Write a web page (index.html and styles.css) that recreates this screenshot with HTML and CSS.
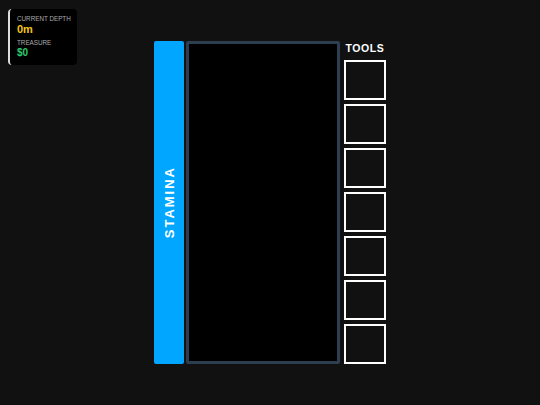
FILE: index.html
```html
<!DOCTYPE html>
<html>
<head>
<meta charset="utf-8">
<link rel="stylesheet" href="styles.css">
</head>
<body>
<div class="hud">
  <div class="hud-label">CURRENT DEPTH</div>
  <div class="hud-depth">0m</div>
  <div class="hud-label hud-gap">TREASURE</div>
  <div class="hud-money">$0</div>
</div>
<div class="stage">
  <div class="game">
    <div class="stamina"><span class="stamina-text">STAMINA</span></div>
    <div class="board"></div>
    <div class="tools">
      <div class="tools-title">TOOLS</div>
      <div class="slot"></div>
      <div class="slot"></div>
      <div class="slot"></div>
      <div class="slot"></div>
      <div class="slot"></div>
      <div class="slot"></div>
      <div class="slot"></div>
    </div>
  </div>
</div>
</body>
</html>
```
FILE: styles.css
```css
html, body {
  margin: 0;
  padding: 0;
  background: #111111;
  font-family: "Liberation Sans", Arial, sans-serif;
  color: #fff;
}
.stage {
  width: 540px;
  height: 405px;
  display: flex;
  align-items: center;
  justify-content: center;
}
.game {
  display: flex;
  align-items: stretch;
  height: 323px;
}
.stamina {
  width: 30px;
  background: #00a6ff;
  border-radius: 2px;
  display: flex;
  align-items: center;
  justify-content: center;
}
.stamina-text {
  writing-mode: vertical-rl;
  transform: rotate(180deg);
  font-weight: bold;
  font-size: 13px;
  letter-spacing: 2px;
  color: #fff;
}
.board {
  margin-left: 2px;
  width: 148px;
  background: #000;
  border: 3px solid #2c3e50;
  border-radius: 2px;
}
.tools {
  margin-left: 4px;
  width: 42px;
  display: flex;
  flex-direction: column;
  gap: 4px;
}
.tools-title {
  font-size: 10.5px;
  font-weight: bold;
  letter-spacing: 0.6px;
  text-align: center;
  height: 15px;
  line-height: 15px;
  color: #fff;
}
.slot {
  height: 36px;
  border: 2px solid #fff;
  background: #111;
}
.hud {
  position: absolute;
  left: 8px;
  top: 9px;
  width: 69px;
  height: 56px;
  box-sizing: border-box;
  padding: 6px 0 0 7px;
  background: #000;
  border-left: 2px solid #ddd;
  border-radius: 4px;
  white-space: nowrap;
}
.hud-label {
  font-size: 6.3px;
  color: #aaa;
  line-height: 8px;
}
.hud-depth {
  font-size: 11px;
  font-weight: bold;
  color: #f5c518;
  line-height: 13px;
}
.hud-money {
  font-size: 10px;
  font-weight: bold;
  color: #2ecc71;
  line-height: 12px;
}
.hud-gap {
  margin-top: 3px;
}
```
